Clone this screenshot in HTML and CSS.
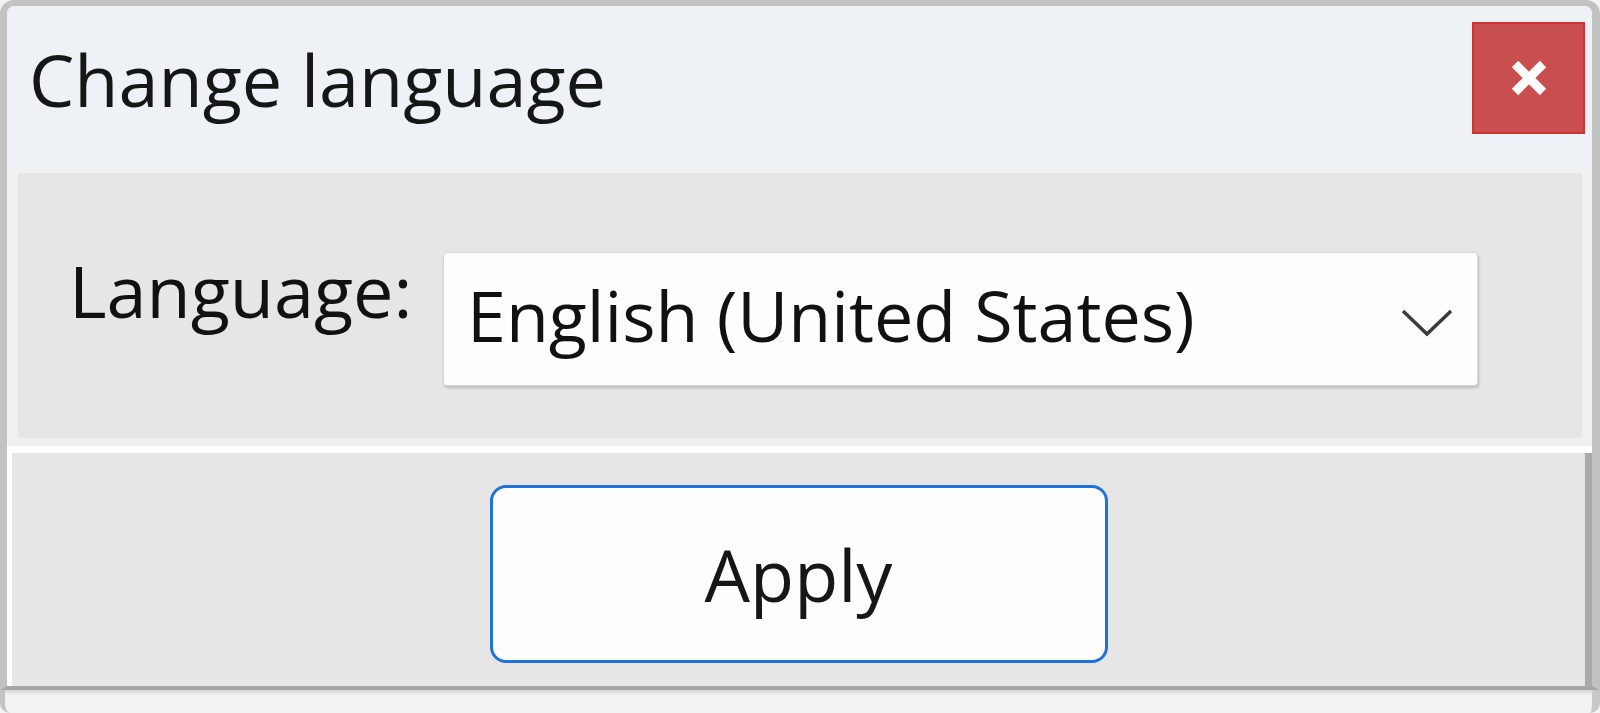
FILE: index.html
```html
<!DOCTYPE html>
<html lang="en">
<head>
<meta charset="utf-8">
<title>Change language</title>
<link rel="stylesheet" href="styles.css">
</head>
<body>
<div class="window">
  <div class="titlebar">
    <span class="title">Change language</span>
    <button class="close" aria-label="Close">
      <svg width="38" height="38" viewBox="0 0 38 38" aria-hidden="true">
        <path d="M5 5 L33 33 M33 5 L5 33" stroke="#ffffff" stroke-width="9" stroke-linecap="butt" fill="none"/>
      </svg>
    </button>
  </div>
  <div class="body-top">
    <div class="panel">
      <span class="label">Language:</span>
      <div class="select">
        <span class="select-text">English (United States)</span>
        <svg class="chevron" width="52" height="28" viewBox="0 0 52 28" aria-hidden="true">
          <polyline points="2,2 26,25 50,2" fill="none" stroke="#3c3c3c" stroke-width="3.5"/>
        </svg>
      </div>
    </div>
  </div>
  <div class="sep"></div>
  <div class="panel2">
    <button class="apply">Apply</button>
  </div>
</div>
<div class="under"></div>
</body>
</html>
```

FILE: styles.css
```css
html, body {
  margin: 0;
  padding: 0;
  background: #f4f4f4;
}

body {
  width: 1600px;
  height: 713px;
  overflow: hidden;
  font-family: "Open Sans", "Noto Sans", sans-serif;
  color: #141414;
}

.window {
  box-sizing: border-box;
  width: 1600px;
  height: 690px;
  border-style: solid;
  border-color: #c2c2c2;
  border-width: 6px 8px 4px 7px;
  border-bottom-color: #a6a6a6;
  border-radius: 14px 14px 0 0;
  background: #f1f1f1;
  display: flex;
  flex-direction: column;
  box-shadow: inset 1px 0 0 #e2e2e2, inset -1px 0 0 #dcdcdc;
}

.titlebar {
  height: 162px;
  flex: none;
  background: #eef2f7;
  display: flex;
  align-items: flex-start;
  justify-content: space-between;
  border-radius: 8px 8px 0 0;
}

.title {
  font-size: 72px;
  line-height: 72px;
  margin-top: 37px;
  margin-left: 22px;
  color: #161616;
}

.close {
  box-sizing: border-box;
  width: 113px;
  height: 112px;
  margin-top: 16px;
  margin-right: 7px;
  padding: 0;
  border: 2px solid #cf3434;
  background: #c94f4f;
  display: flex;
  align-items: center;
  justify-content: center;
}

.body-top {
  flex: none;
  padding: 5px 10px 8px 11px;
  background: #f0f0f0;
}

.panel {
  height: 265px;
  box-sizing: border-box;
  background: #e6e6e6;
  display: flex;
  align-items: flex-start;
  padding: 79px 0 0 51px;
}

.label {
  font-size: 72px;
  line-height: 72px;
  margin-top: 2px;
  width: 374px;
  flex: none;
  color: #111;
}

.select {
  box-sizing: border-box;
  width: 1035px;
  height: 134px;
  background: #fdfdfd;
  border: 1px solid #d6d6d6;
  border-radius: 4px;
  box-shadow: 1px 2px 3px rgba(0, 0, 0, 0.18);
  display: flex;
  align-items: flex-start;
  justify-content: space-between;
  padding: 26px 24px 0 23px;
}

.select-text {
  font-size: 70px;
  line-height: 72px;
  color: #111;
}

.chevron {
  margin-top: 30px;
}

.sep {
  flex: none;
  height: 7px;
  background: #ffffff;
}

.panel2 {
  flex: 1;
  background: #e6e6e6;
  margin: 0 0 0 5px;
  box-shadow: -5px 0 0 #ffffff, inset -7px 0 0 #a9a9a9;
  display: flex;
  justify-content: center;
  align-items: flex-start;
  padding-top: 32px;
  padding-right: 7px;
}

.apply {
  box-sizing: border-box;
  width: 618px;
  height: 178px;
  margin-left: 0;
  background: #fdfdfd;
  border: 3px solid #1f72d8;
  border-radius: 16px;
  font-family: "Open Sans", "Noto Sans", sans-serif;
  font-size: 72px;
  line-height: 72px;
  color: #161616;
  padding: 0;
}

.under {
  height: 23px;
  background: linear-gradient(#d2d2d2, #f3f3f3 5px);
  border-left: 5px solid #c4c4c4;
  border-right: 8px solid #c8c8c8;
  border-radius: 0 0 10px 10px;
  box-sizing: border-box;
}
```
